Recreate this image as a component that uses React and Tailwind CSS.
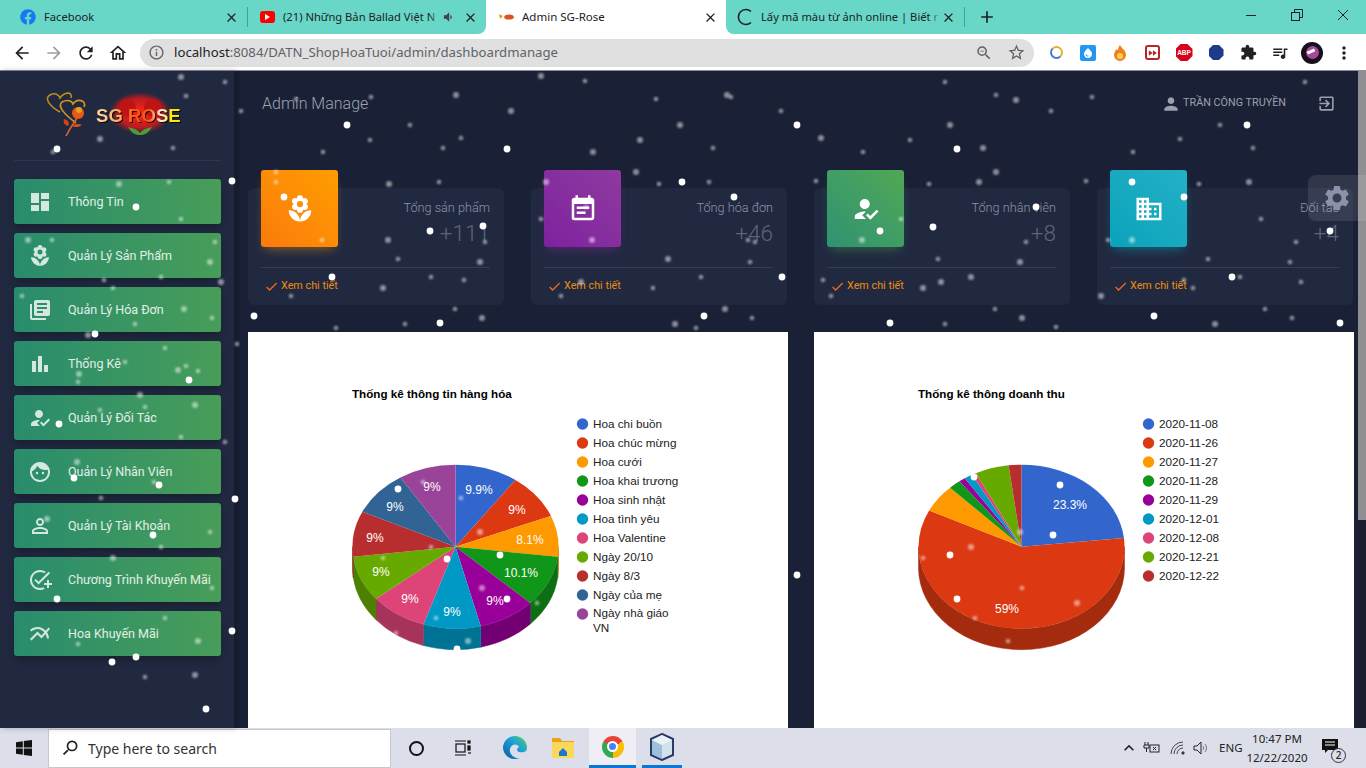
import React from 'react';
import {
    MdDashboard, MdLocalFlorist, MdLibraryBooks, MdBarChart, MdHowToReg, MdFace, MdPersonOutline, MdAddTask,
    MdMultilineChart, MdEventNote, MdBusiness, MdPerson, MdExitToApp, MdSettings, MdCheck, MdClose, MdAdd,
    MdArrowBack, MdArrowForward, MdRefresh, MdOutlineHome, MdInfoOutline, MdZoomOut, MdStarBorder, MdExtension,
    MdMoreVert, MdQueueMusic, MdFastForward, MdWaterDrop, MdVolumeDown, MdKeyboardArrowUp, MdSearch,
} from 'react-icons/md';
import { FaFacebook } from 'react-icons/fa';

const menuItems = [
    { label: 'Thông Tin', Icon: MdDashboard },
    { label: 'Quản Lý Sản Phẩm', Icon: MdLocalFlorist },
    { label: 'Quản Lý Hóa Đơn', Icon: MdLibraryBooks },
    { label: 'Thống Kê', Icon: MdBarChart },
    { label: 'Quản Lý Đối Tác', Icon: MdHowToReg },
    { label: 'Quản Lý Nhân Viên', Icon: MdFace },
    { label: 'Quản Lý Tài Khoản', Icon: MdPersonOutline },
    { label: 'Chương Trình Khuyến Mãi', Icon: MdAddTask },
    { label: 'Hoa Khuyến Mãi', Icon: MdMultilineChart },
];

const statCards = [
    { title: 'Tổng sản phẩm', value: '+111', Icon: MdLocalFlorist, box: 'bg-linear-to-tr from-[#fb7a0c] to-[#ff9d00] shadow-[0_6px_10px_-4px_rgba(255,152,0,0.45)]' },
    { title: 'Tổng hóa đơn', value: '+46', Icon: MdEventNote, box: 'bg-linear-to-tr from-[#7f20a0] to-[#8e3a9f] shadow-[0_6px_10px_-4px_rgba(156,39,176,0.45)]' },
    { title: 'Tổng nhân viên', value: '+8', Icon: MdHowToReg, box: 'bg-linear-to-tr from-[#2f9272] to-[#50a853] shadow-[0_6px_10px_-4px_rgba(76,175,80,0.45)]' },
    { title: 'Đối tác', value: '+4', Icon: MdBusiness, box: 'bg-linear-to-tr from-[#08a3bb] to-[#22b0c6] shadow-[0_6px_10px_-4px_rgba(0,188,212,0.45)]' },
];

const COLORS = ['#3366cc', '#dc3912', '#ff9900', '#109618', '#990099', '#0099c6', '#dd4477', '#66aa00', '#b82e2e', '#316395', '#994499'];
const DARK = ['#264c99', '#a52b0e', '#bf7300', '#0c7012', '#730073', '#007394', '#a63359', '#4d8000', '#8a2222', '#254a70', '#733373'];

const goodsChart = {
    title: 'Thống kê thông tin hàng hóa',
    values: [9.9, 9, 8.1, 10.1, 9, 9, 9, 9, 9, 9, 9],
    legend: ['Hoa chi buồn', 'Hoa chúc mừng', 'Hoa cưới', 'Hoa khai trương', 'Hoa sinh nhật', 'Hoa tình yêu', 'Hoa Valentine', 'Ngày 20/10', 'Ngày 8/3', 'Ngày của mẹ', 'Ngày nhà giáo'],
    extraLine: 'VN',
    labels: [['9.9%', 231, 162], ['9%', 269, 182], ['8.1%', 282, 212], ['10.1%', 273, 245], ['9%', 247, 273], ['9%', 204, 284], ['9%', 162, 271], ['9%', 133, 244], ['9%', 127, 210], ['9%', 147, 179], ['9%', 184, 159]],
};

const revenueChart = {
    title: 'Thống kê thông doanh thu',
    values: [23.3, 59, 5.5, 1.9, 1, 1.3, 0.7, 5.3, 2],
    legend: ['2020-11-08', '2020-11-26', '2020-11-27', '2020-11-28', '2020-11-29', '2020-12-01', '2020-12-08', '2020-12-21', '2020-12-22'],
    labels: [['23.3%', 256, 177], ['59%', 193, 281]],
};

const brightSnow = [
    [57, 149], [232, 181], [136, 207], [95, 334], [189, 380], [59, 424], [74, 478], [159, 485], [235, 499], [153, 535], [57, 599],
    [232, 631], [136, 657], [112, 662], [206, 709], [284, 197], [430, 231], [483, 226], [332, 277], [254, 316], [440, 323], [682, 182],
    [734, 197], [782, 277], [704, 316], [957, 149], [1247, 125], [1036, 207], [933, 227], [880, 231], [1132, 182], [1184, 197],
    [1330, 231], [1232, 277], [890, 323], [1154, 316], [1340, 323], [347, 125], [507, 149], [797, 125], [398, 489], [447, 559],
    [500, 555], [507, 599], [457, 649], [1060, 485], [1053, 535], [950, 555], [957, 599], [974, 477], [797, 575],
];

const dimSnow = [
    [181, 77], [225, 82], [186, 96], [100, 139], [173, 148], [53, 152], [119, 184], [169, 182], [181, 219], [28, 240], [52, 240], [215, 242],
    [210, 262], [104, 280], [161, 277], [221, 282], [113, 288], [22, 296], [184, 309], [212, 318], [135, 324], [88, 335], [165, 348], [125, 362],
    [178, 370], [186, 366], [198, 371], [79, 374], [78, 382], [237, 344], [140, 395], [100, 410], [145, 407], [195, 405], [181, 437], [225, 442],
    [77, 462], [154, 482], [101, 498], [47, 519], [210, 532], [161, 547], [113, 558], [212, 588], [165, 618], [198, 641], [78, 644], [145, 677], [195, 675],
    [276, 172], [276, 182], [389, 184], [439, 182], [322, 240], [388, 240], [485, 242], [398, 259], [480, 262], [431, 277], [464, 280], [383, 288],
    [291, 296], [455, 309], [482, 318], [336, 328], [405, 324], [636, 172], [659, 184], [709, 182], [546, 182], [541, 219], [586, 207], [592, 240],
    [748, 240], [755, 242], [668, 259], [750, 262], [701, 277], [581, 282], [653, 288], [561, 296], [725, 309], [752, 318], [696, 328], [675, 324],
    [945, 82], [996, 95], [1016, 100], [1092, 97], [1051, 111], [950, 125], [1220, 125], [1180, 139], [821, 138], [910, 140], [863, 152], [983, 148],
    [1133, 152], [1253, 148], [996, 172], [816, 181], [929, 184], [979, 182], [1086, 181], [1199, 184], [1249, 182], [901, 219], [1261, 219], [862, 240],
    [1026, 242], [1108, 240], [1132, 240], [1296, 242], [938, 259], [1020, 262], [1208, 259], [1290, 262], [971, 277], [1240, 277], [823, 280], [941, 282],
    [1184, 280], [1301, 282], [923, 288], [1193, 288], [831, 296], [1101, 296], [995, 309], [1265, 309], [1022, 318], [1292, 318], [945, 324], [1215, 324],
    [1056, 327], [1305, 82], [541, 76], [585, 81], [656, 99], [727, 95], [731, 97], [371, 97], [456, 95], [296, 99], [241, 111], [511, 111], [781, 111],
    [410, 125], [680, 125], [370, 140], [461, 138], [640, 140], [443, 148], [323, 152], [593, 152], [713, 148], [461, 498], [480, 532], [431, 547], [383, 558],
    [482, 588], [537, 603], [436, 618], [468, 641], [396, 633], [423, 482], [971, 547], [923, 558], [1022, 588], [1077, 603], [975, 618], [1008, 641], [1020, 532],
];

// pie geometry, same for both charts
const CX = 207.5;
const CY = 214.7;
const RX = 103;
const RY = 82;
const DEPTH = 21;

const point = (deg, drop = 0) => {
    const rad = (deg * Math.PI) / 180;
    return `${(CX + RX * Math.sin(rad)).toFixed(2)} ${(CY - RY * Math.cos(rad) + drop).toFixed(2)}`;
};

function Pie3D({ values, labels }) {
    const total = values.reduce((sum, v) => sum + v, 0);
    let start = 0;
    const slices = values.map((v, i) => {
        const end = start + (v / total) * 360;
        const slice = { start, end, fill: COLORS[i], dark: DARK[i] };
        start = end;
        return slice;
    });

    return (
        <g>
            {slices.map((s, i) => {
                const a = Math.max(s.start, 90);
                const b = Math.min(s.end, 270);
                if (a >= b) return null;
                const large = b - a > 180 ? 1 : 0;
                return (
                    <path
                        key={i}
                        fill={s.dark}
                        stroke={s.dark}
                        strokeWidth="0.5"
                        d={`M${point(a)} A${RX} ${RY} 0 ${large} 1 ${point(b)} L${point(b, DEPTH)} A${RX} ${RY} 0 ${large} 0 ${point(a, DEPTH)} Z`}
                    />
                );
            })}
            {slices.map((s, i) => (
                <path
                    key={i}
                    fill={s.fill}
                    d={`M${CX} ${CY} L${point(s.start)} A${RX} ${RY} 0 ${s.end - s.start > 180 ? 1 : 0} 1 ${point(s.end)} Z`}
                />
            ))}
            {labels.map(([text, x, y]) => (
                <text key={`${text}-${x}`} x={x} y={y} textAnchor="middle" fill="#fff" fontSize="12">{text}</text>
            ))}
        </g>
    );
}

function ChartCard({ chart }) {
    return (
        <div className="h-[420px] bg-white">
            <svg width="540" height="420" className="block font-['Liberation_Sans',Arial,sans-serif]">
                <text x="104" y="66" fontSize="11.65" fontWeight="700" fill="#000">{chart.title}</text>
                <Pie3D values={chart.values} labels={chart.labels} />
                {chart.legend.map((name, i) => (
                    <g key={name}>
                        <circle cx="334.5" cy={92 + i * 19} r="5.7" fill={COLORS[i]} />
                        <text x="345" y={(i === 10 ? 95 : 96) + i * 19} fontSize="11.72" fill="#222">{name}</text>
                    </g>
                ))}
                {chart.extraLine && (
                    <text x="345" y={96 + chart.legend.length * 19 - 5} fontSize="11.72" fill="#222">{chart.extraLine}</text>
                )}
            </svg>
        </div>
    );
}

function Logo() {
    return (
        <div className="relative h-[48px] w-[136px]">
            <svg width="136" height="48" viewBox="0 0 136 48" className="block">
                <defs>
                    <radialGradient id="roseGlow">
                        <stop offset="0" stopColor="#ff2a1a" stopOpacity="1" />
                        <stop offset="0.7" stopColor="#e01818" stopOpacity="0.8" />
                        <stop offset="1" stopColor="#d81818" stopOpacity="0" />
                    </radialGradient>
                </defs>
                <path d="M14 20 C3 14 -2 6 4 3 C9 0 13 3 14 6 C18 0 27 -1 25 6" fill="none" stroke="#c08a1c" strokeWidth="1.6" />
                <path d="M30 31 C18 22 11 14 16 10 C22 7 26 9 27 12 C31 6 41 8 38 15" fill="none" stroke="#d09a20" strokeWidth="1.6" />
                <path d="M20 44 C24 36 27 32 31 26" fill="none" stroke="#d9622a" strokeWidth="1.6" />
                <path d="M22 34 C18 33 17 30 18 27 C22 28 24 31 22 34 Z" fill="#d9401a" />
                <path d="M26 34 C30 36 33 35 36 33 C32 31 28 32 26 34 Z" fill="#e0501c" />
                <circle cx="32" cy="21" r="6" fill="#e85a14" />
                <circle cx="33" cy="18" r="3" fill="#e8a020" />
                <ellipse cx="94" cy="21" rx="31" ry="21" fill="url(#roseGlow)" />
                <circle cx="81" cy="16" r="9" fill="#c01414" />
                <circle cx="107" cy="16" r="9" fill="#c01414" />
                <path d="M82 35 C88 36 92 38 94 41 C96 38 100 36 106 35 C102 42 98 43 94 43 C90 43 86 42 82 35 Z" fill="#4f9a34" />
            </svg>
            <span className="absolute left-[50px] top-[13px] bg-[linear-gradient(90deg,#ffd8a8_0%,#f7a860_30%,#ff5010_45%,#ff5a14_62%,#fff0e0_76%,#ffe600_90%)] bg-clip-text font-['Liberation_Sans',sans-serif] text-[18.6px] leading-[22px] font-bold whitespace-nowrap text-transparent drop-shadow-[1px_1px_0_rgba(0,0,0,0.8)]">
                SG ROSE
            </span>
        </div>
    );
}

function Sidebar() {
    return (
        <aside className="z-10 w-[234px] shrink-0 bg-[#202940] pl-[14px] pr-[13px] shadow-[2px_0_6px_rgba(0,0,0,0.25)]">
            <div className="flex h-[90px] items-center border-b border-[#2e3750] pl-[32px]">
                <Logo />
            </div>
            <nav className="flex flex-col gap-[9px] pt-[18px]">
                {menuItems.map(({ label, Icon }) => (
                    <a
                        key={label}
                        className="flex h-[45px] items-center gap-[16px] rounded-[3px] bg-linear-to-r from-[#288c6c] to-[#479d58] pl-[14px] text-[12.5px] text-white/85 shadow-[0_5px_8px_-2px_rgba(0,0,0,0.3)]"
                    >
                        <Icon className="size-[24px] text-[#d5e8df]" />
                        <span className="whitespace-nowrap pt-[2px]">{label}</span>
                    </a>
                ))}
            </nav>
        </aside>
    );
}

function StatCard({ title, value, Icon, box }) {
    return (
        <div className="h-[117px] rounded-md bg-[#202940] pl-[13px] pr-[14px]">
            <div className="flex h-[80px] justify-between border-b border-[#353d54]">
                <div className={`-mt-[18px] flex size-[77px] shrink-0 items-center justify-center rounded-[3px] ${box}`}>
                    <Icon className="size-[30px] text-white" />
                </div>
                <div className="pt-[11px] text-right">
                    <p className="text-[12.7px] leading-[18px] font-light text-[#8b92a9]">{title}</p>
                    <p className="mt-[1px] text-[22.5px] leading-[30px] font-light text-[#5d6479]">{value}</p>
                </div>
            </div>
            <div className="flex h-[37px] items-center gap-[2px] pl-[3px]">
                <MdCheck className="size-[15px] text-[#f0661c]" />
                <span className="text-[10.8px] text-[#ee8c10]">Xem chi tiết</span>
            </div>
        </div>
    );
}

function Dashboard() {
    return (
        <main className="min-w-0 flex-1 overflow-hidden pl-[14px] text-left">
            <header className="flex h-[65px] items-center justify-between pl-[14px] pr-[22px]">
                <h1 className="text-[16px] font-light text-[#9da3b4]">Admin Manage</h1>
                <div className="flex items-center">
                    <MdPerson className="size-[20px] text-[#9aa0b0]" />
                    <span className="ml-[2px] text-[10.8px] text-[#9aa0b0]">TRẦN CÔNG TRUYỀN</span>
                    <MdExitToApp className="ml-[31px] size-[19px] text-[#9aa0b0]" />
                </div>
            </header>
            <section className="mt-[52px] grid w-[1105px] grid-cols-4 gap-[27px]">
                {statCards.map(card => <StatCard key={card.title} {...card} />)}
            </section>
            <section className="mt-[27px] grid w-[1106px] grid-cols-2 gap-[26px]">
                <ChartCard chart={goodsChart} />
                <ChartCard chart={revenueChart} />
            </section>
        </main>
    );
}

function Snow() {
    return (
        <svg viewBox="0 71 1366 657" className="pointer-events-none absolute inset-0 z-20 size-full">
            <defs>
                <filter id="soft"><feGaussianBlur stdDeviation="0.8" /></filter>
                <filter id="softer"><feGaussianBlur stdDeviation="0.4" /></filter>
            </defs>
            <g fill="#fff" opacity="0.5" filter="url(#soft)">
                {dimSnow.map(([x, y], i) => <circle key={i} cx={x} cy={y} r={i % 3 === 0 ? 3 : 2.3} />)}
            </g>
            <g fill="#fff" filter="url(#softer)">
                {brightSnow.map(([x, y], i) => <circle key={i} cx={x} cy={y} r="3.4" />)}
            </g>
        </svg>
    );
}

function Tab({ icon, title, width, pad, audio, fade = true, active }) {
    return (
        <div className={`flex h-[34px] shrink-0 items-center pr-[8px] ${pad} ${width} ${active ? 'rounded-t-lg bg-white text-[11.5px]' : 'text-[11.2px]'}`}>
            <div className="flex min-w-[23px] shrink-0 justify-start">{icon}</div>
            <div className="relative min-w-0 flex-1 overflow-hidden whitespace-nowrap text-[#202124]">
                {title}
                {fade && <div className="absolute inset-y-0 right-0 w-[12px] bg-linear-to-r from-[#68d7c7]/0 to-[#68d7c7]" />}
            </div>
            {audio && <MdVolumeDown className="mr-[8px] size-[14px] text-[#444]" />}
            <MdClose className="size-[15px] shrink-0 text-[#202124]" />
        </div>
    );
}

function TabBar() {
    return (
        <div className="flex h-[35px] bg-white">
            <div className="flex h-[34px] items-center rounded-br-lg bg-[#68d7c7] pl-[6px]">
                <Tab width="w-[241px]" pad="pl-[14px]" fade={false} title="Facebook" icon={<FaFacebook className="mr-[8px] size-[16px] text-[#1877f2]" />} />
                <div className="h-[20px] w-px bg-[#4c9e92]" />
                <Tab
                    width="w-[238px]"
                    pad="pl-[12px]"
                    audio
                    title="(21) Những Bản Ballad Việt N"
                    icon={<span className="flex h-[12px] w-[15px] items-center justify-center rounded-[3px] bg-[#f00]"><span className="border-y-[3px] border-l-[5px] border-y-transparent border-l-white" /></span>}
                />
            </div>
            <Tab
                active
                fade={false}
                width="w-[240px]"
                pad="pl-[13px]"
                title="Admin SG-Rose"
                icon={
                    <svg width="15" height="8" viewBox="0 0 15 8">
                        <path d="M0 1 L4 3 L1 6 Z" fill="#e0a020" />
                        <ellipse cx="10" cy="4" rx="4.8" ry="2.6" fill="#e05020" />
                    </svg>
                }
            />
            <div className="flex h-[34px] flex-1 items-center rounded-bl-lg bg-[#68d7c7]">
                <Tab
                    width="w-[238px]"
                    pad="pl-[10px]"
                    title="Lấy mã màu từ ảnh online | Biết r"
                    icon={<svg className="mr-[8px]" width="17" height="18" viewBox="0 0 17 18"><path d="M15 3.5 A7.5 7.5 0 1 0 15 14.5" fill="none" stroke="#202124" strokeWidth="1.6" /></svg>}
                />
                <div className="h-[20px] w-px bg-[#4c9e92]" />
                <MdAdd className="ml-[12px] size-[20px] text-[#202124]" />
                <div className="ml-auto flex h-full items-start">
                    <div className="flex h-[29px] w-[47px] items-center justify-center">
                        <svg width="12" height="12" viewBox="0 0 12 12" stroke="#202124"><path d="M1 6.5 H11" /></svg>
                    </div>
                    <div className="flex h-[29px] w-[46px] items-center justify-center">
                        <svg width="12" height="12" viewBox="0 0 12 12" fill="none" stroke="#202124"><rect x="0.5" y="3.5" width="8" height="8" /><path d="M3.5 3.5 V0.5 H11.5 V8.5 H8.5" /></svg>
                    </div>
                    <div className="flex h-[29px] w-[46px] items-center justify-center">
                        <svg width="12" height="12" viewBox="0 0 12 12" stroke="#202124"><path d="M1 1 L11 11 M11 1 L1 11" /></svg>
                    </div>
                </div>
            </div>
        </div>
    );
}

function ExtSlot({ children }) {
    return <div className="flex w-[32px] shrink-0 justify-center">{children}</div>;
}

function Toolbar() {
    return (
        <div className="flex h-[36px] items-center border-b border-[#8a8d94] bg-white pl-[12px]">
            <div className="flex items-center gap-[12px] text-[#202124]">
                <MdArrowBack className="size-[20px]" />
                <MdArrowForward className="size-[20px] text-[#9aa0a6]" />
                <MdRefresh className="size-[20px]" />
                <MdOutlineHome className="size-[20px]" />
            </div>
            <div className="ml-[12px] flex h-[28px] w-[894px] items-center rounded-full bg-[#e0e0e0] pl-[8px] pr-[8px]">
                <MdInfoOutline className="size-[17px] text-[#5f6368]" />
                <span className="ml-[9px] text-[13.2px] text-[#5f6368]"><span className="text-[#202124]">localhost</span>:8084/DATN_ShopHoaTuoi/admin/dashboardmanage</span>
                <MdZoomOut className="ml-auto size-[18px] text-[#5f6368]" />
                <MdStarBorder className="ml-[14px] size-[19px] text-[#5f6368]" />
            </div>
            <div className="ml-[6px] flex items-center">
                <ExtSlot><span className="size-[13px] rounded-full border-2 border-[#e8b030] border-l-[#3a7ad8] border-b-[#3a7ad8]" /></ExtSlot>
                <ExtSlot><span className="flex size-[16px] items-center justify-center rounded-[2px] bg-[#2196f3]"><MdWaterDrop className="size-[12px] text-white" /></span></ExtSlot>
                <ExtSlot>
                    <svg width="14" height="16" viewBox="0 0 14 16"><path d="M7 0 C8 3 13 5 13 10 A6 6 0 0 1 1 10 C1 7 3 6 3 4 C4 5 5 5 5 5 C5 3 6 1 7 0 Z" fill="#f0801c" /><circle cx="7" cy="11" r="3" fill="#ffcf5a" /></svg>
                </ExtSlot>
                <ExtSlot><span className="flex size-[15px] items-center justify-center rounded-[3px] border-2 border-[#b3262c]"><MdFastForward className="size-[12px] text-[#b3262c]" /></span></ExtSlot>
                <ExtSlot><span className="flex size-[17px] items-center justify-center bg-[#d9001b] font-['Liberation_Sans',sans-serif] text-[6.5px] font-bold text-white [clip-path:polygon(30%_0,70%_0,100%_30%,100%_70%,70%_100%,30%_100%,0_70%,0_30%)]">ABP</span></ExtSlot>
                <ExtSlot><span className="size-[15px] bg-[#1e3a8a] [clip-path:polygon(30%_0,70%_0,100%_30%,100%_70%,70%_100%,30%_100%,0_70%,0_30%)]" /></ExtSlot>
                <ExtSlot><MdExtension className="size-[17px] text-[#202124]" /></ExtSlot>
                <ExtSlot><MdQueueMusic className="size-[18px] text-[#202124]" /></ExtSlot>
                <ExtSlot>
                    <span className="relative size-[22px] overflow-hidden rounded-full bg-[#15101c]">
                        <span className="absolute left-[5px] top-[4px] size-[13px] rounded-full bg-[#a8489c]" />
                        <span className="absolute left-[6px] top-[8px] h-[3px] w-[8px] rotate-[-25deg] bg-white" />
                    </span>
                </ExtSlot>
                <ExtSlot><MdMoreVert className="size-[20px] text-[#202124]" /></ExtSlot>
            </div>
        </div>
    );
}

function Taskbar() {
    return (
        <div className="flex h-[40px] items-center bg-[#dcdfe9] font-['Noto_Sans',sans-serif] text-[#1f1f1f]">
            <div className="flex w-[48px] justify-center">
                <svg width="16" height="16" viewBox="0 0 16 16"><path d="M0 2.2 L6.8 1.2 V7.4 H0 Z M7.8 1 L16 0 V7.4 H7.8 Z M0 8.4 H6.8 V14.8 L0 13.8 Z M7.8 8.4 H16 V16 L7.8 15 Z" fill="#111" /></svg>
            </div>
            <div className="flex h-[39px] w-[343px] items-center border border-[#c5c8d0] bg-white pl-[11px]">
                <MdSearch className="size-[20px] -scale-x-100 text-[#222]" />
                <span className="ml-[8px] text-[14px] text-[#333]">Type here to search</span>
            </div>
            <div className="flex h-[40px] items-center">
                <div className="flex w-[50px] justify-center"><span className="size-[15px] rounded-full border-[2.5px] border-[#111]" /></div>
                <div className="flex w-[44px] justify-center">
                    <svg width="18" height="16" viewBox="0 0 18 16" fill="none" stroke="#111" strokeWidth="1.2"><path d="M1 1 H12 M1 15 H12" /><rect x="2" y="4" width="9" height="8" /><rect x="14" y="1" width="2" height="2" fill="#111" /><rect x="14" y="6" width="2" height="4" fill="#111" /><path d="M14 13 H17" /></svg>
                </div>
                <div className="flex w-[60px] justify-center">
                    <svg width="24" height="24" viewBox="0 0 24 24">
                        <defs><linearGradient id="edgeFill" x1="0" y1="1" x2="1" y2="0"><stop offset="0" stopColor="#0c59a4" /><stop offset="0.6" stopColor="#1ba3d8" /><stop offset="1" stopColor="#5fd34a" /></linearGradient></defs>
                        <path d="M12 0 A12 12 0 0 1 24 12 C24 16 20 17 16 16 C13 15 14 12 16 11 C14 7 8 8 7 13 C6 18 11 23 17 22 A12 12 0 0 1 0 12 A12 12 0 0 1 12 0 Z" fill="url(#edgeFill)" />
                    </svg>
                </div>
                <div className="flex w-[44px] justify-start pl-[7px]">
                    <svg width="22" height="20" viewBox="0 0 22 20"><path d="M0 0 H8 L10 3 H22 V6 H0 Z" fill="#e8a21c" /><rect y="4" width="22" height="16" fill="#fbd75b" /><path d="M7 14 L11 10 L15 14 V18 H7 Z" fill="#1e78c8" /></svg>
                </div>
                <div className="flex h-full w-[47px] items-center justify-center border-b-[3px] border-[#0a78d4] bg-[#eeeef4]">
                    <span className="flex size-[22px] items-center justify-center rounded-full bg-[conic-gradient(from_-60deg,#ea4335_0_33%,#fbbc05_33%_66%,#34a853_66%_100%)]">
                        <span className="size-[11px] rounded-full border-2 border-white bg-[#4285f4]" />
                    </span>
                </div>
                <div className="ml-[6px] flex h-full w-[40px] items-center justify-center border-b-[3px] border-[#0a78d4]">
                    <svg width="24" height="28" viewBox="0 0 24 28"><path d="M12 1 L23 6 V22 L12 27 L1 22 V6 Z" fill="#cfe2ee" stroke="#2b3a67" strokeWidth="2" /><path d="M12 12 L12 26 L2 21 V7 Z" fill="#9cc0da" /><path d="M12 12 L22 7 L12 2 L2 7 Z" fill="#e8f2f7" /></svg>
                </div>
            </div>
            <div className="ml-auto flex items-center text-[#222]">
                <MdKeyboardArrowUp className="size-[20px]" />
                <svg className="ml-[4px]" width="18" height="14" viewBox="0 0 18 14" fill="none" stroke="#222"><path d="M2 1 V4 M5 1 V4 M1 4 H6 V7 H1 Z M3.5 7 V11" /><rect x="7" y="4" width="9" height="7" /><path d="M10 6 L13 9 M13 6 L10 9" /></svg>
                <svg className="ml-[9px]" width="16" height="14" viewBox="0 0 16 14" fill="none" stroke="#444"><path d="M1 13 A12 12 0 0 1 13 1 M4 13 A9 9 0 0 1 13 4 M7 13 A6 6 0 0 1 13 7" /><circle cx="13" cy="12" r="1.2" fill="#222" /></svg>
                <svg className="ml-[7px]" width="16" height="14" viewBox="0 0 16 14" fill="none" stroke="#222"><path d="M1 5 H4 L8 1 V13 L4 9 H1 Z" /><path d="M10 5 A3 3 0 0 1 10 9 M12 3 A6 6 0 0 1 12 11" stroke="#777" /></svg>
                <span className="ml-[10px] w-[23px] whitespace-nowrap text-[11.5px]">ENG</span>
                <div className="ml-0 w-[70px] text-center text-[11.5px] leading-[19px]">
                    <div>10:47 PM</div>
                    <div>12/22/2020</div>
                </div>
                <div className="relative ml-[8px] mr-[22px] h-[24px] w-[24px]">
                    <svg width="18" height="18" viewBox="0 0 18 18" className="ml-[2px] mt-[2px]"><path d="M0 1 H16 V12 H6 L3 15 V12 H0 Z" fill="#111" /><path d="M3 4 H13 M3 7 H13" stroke="#fff" /></svg>
                    <span className="absolute -bottom-[3px] -right-[2px] flex size-[15px] items-center justify-center rounded-full border border-[#333] bg-[#dcdfe9] text-[10px] font-medium">2</span>
                </div>
            </div>
        </div>
    );
}

export default function App() {
    return (
        <div className="flex h-screen w-[1366px] flex-col overflow-hidden font-['Roboto',sans-serif]">
            <div className="font-['Noto_Sans',sans-serif]">
                <TabBar />
                <Toolbar />
            </div>
            <div className="relative flex min-h-0 flex-1 bg-[#1a2035]">
                <Sidebar />
                <Dashboard />
                <div className="w-[8px] shrink-0 bg-[#1b1f2e]">
                    <div className="h-[449px] bg-[#8f8f93]" />
                </div>
                <div className="absolute right-0 top-[104px] z-10 flex h-[46px] w-[58px] items-center justify-center rounded-l-lg bg-white/10">
                    <MdSettings className="size-[30px] text-[#8b92a9]" />
                </div>
                <Snow />
            </div>
            <Taskbar />
        </div>
    );
}
